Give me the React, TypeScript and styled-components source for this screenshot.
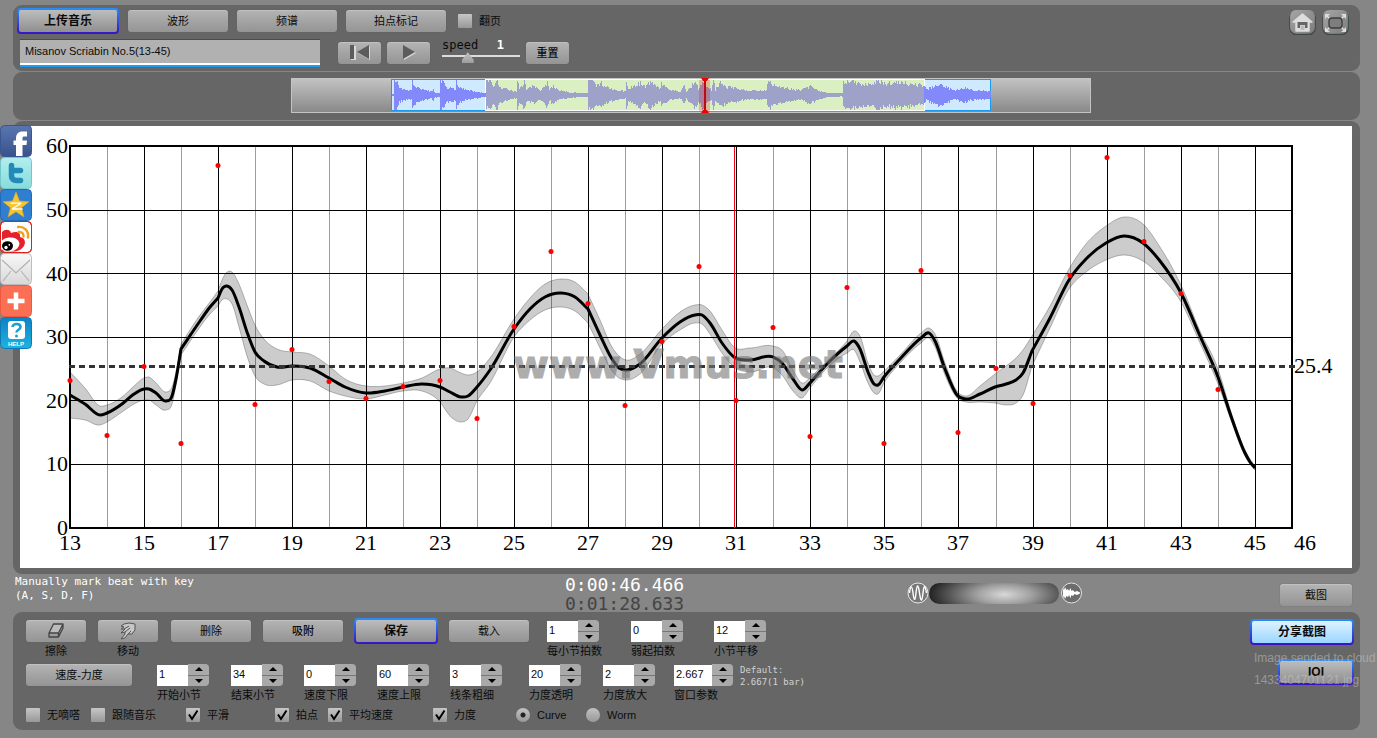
import React from "react";
import styled, { createGlobalStyle, css } from "styled-components";

const SANS = '"Liberation Sans", "Noto Sans CJK SC", sans-serif';
const MONO = '"DejaVu Sans Mono", monospace';

const GlobalStyle = createGlobalStyle`
  * { box-sizing: border-box; }
  body {
    margin: 0;
    background: #868686;
    overflow-x: hidden;
    font: 11px/14px ${SANS};
    color: #0b0b0b;
  }
  button, input { font: inherit; color: inherit; margin: 0; }
`;

const Page = styled.main`
  position: relative;
  display: flex;
  flex-direction: column;
  gap: 1px;
  padding: 5px 17px 7px 13px;
  overflow: hidden;
`;

const Panel = styled.section`
  background: #666;
  border-radius: 9px;
`;

/* ---------- shared controls ---------- */

const ringed = css`
  border: 2px solid transparent;
  border-radius: 4px;
  font-weight: bold;
`;

const Button = styled.button<{ $w: number; $ring?: boolean; $blue?: boolean; $bold?: boolean }>`
  display: inline-flex;
  align-items: center;
  justify-content: center;
  width: ${(p) => p.$w}px;
  height: ${(p) => (p.$ring ? 26 : 22)}px;
  padding: 0;
  border: 0;
  border-radius: 3px;
  font-size: ${(p) => (p.$ring ? 12 : 11)}px;
  line-height: 14px;
  font-weight: ${(p) => (p.$bold ? 500 : 400)};
  cursor: pointer;
  background: linear-gradient(#b4b4b4, #949494);
  box-shadow: inset 0 1px 0 rgba(255, 255, 255, 0.18), 0 0 1px #505050;
  ${(p) =>
    p.$ring &&
    css`
      ${ringed}
      box-shadow: none;
      background:
        linear-gradient(${p.$blue ? "#dff3ff, #9bd6ff" : "#bdbdbd, #8f8f8f"}) padding-box,
        linear-gradient(#2a8ff5, #3a10c8) border-box;
    `}
`;

const CheckLabel = styled.label`
  display: inline-flex;
  align-items: center;
  gap: 7px;
  white-space: nowrap;
`;

const Tick = styled.input`
  appearance: none;
  width: 14px;
  height: 14px;
  flex: none;
  border-radius: 1px;
  background: linear-gradient(#c6c6c6, #989898);
  &:checked {
    background:
      url("data:image/svg+xml,%3Csvg xmlns='http://www.w3.org/2000/svg' viewBox='0 0 14 14'%3E%3Cpath d='M3 6.5L6 11L11.5 2.5' fill='none' stroke='%23000' stroke-width='2'/%3E%3C/svg%3E"),
      linear-gradient(#c6c6c6, #989898);
  }
`;

const Radio = styled.input`
  appearance: none;
  width: 14px;
  height: 14px;
  flex: none;
  border-radius: 50%;
  background: linear-gradient(#c2c2c2, #989898);
  &:checked {
    background: radial-gradient(circle, #222 0 2px, transparent 3px), linear-gradient(#c2c2c2, #989898);
  }
`;

/* ---------- header ---------- */

const Header = styled(Panel)`
  display: flex;
  justify-content: space-between;
  padding: 3px 11px 4px 4px;
`;

const HeaderRows = styled.div`
  display: flex;
  flex-direction: column;
  gap: 5px;
`;

const TabRow = styled.div`
  display: flex;
  align-items: center;
  gap: 9px;
  & > label { margin-left: 3px; }
`;

const TransportRow = styled.div`
  display: flex;
  align-items: center;
  gap: 6px;
  padding-left: 3px;
`;

const TitleField = styled.input`
  width: 300px;
  height: 28px;
  margin-right: 12px;
  padding: 0 5px 3px;
  border: 0;
  border-top: 1px solid #4c4c4c;
  border-bottom: 2px solid #1d9bf5;
  background: linear-gradient(#b1b1b1, #b1b1b1) top / 100% 23px no-repeat, #fff;
`;

const Speed = styled.label`
  display: flex;
  flex-wrap: wrap;
  width: 78px;
  margin-left: 6px;
  margin-top: -4px;
  font: 12px/12px ${MONO};
  b { margin-left: auto; margin-right: 16px; color: #fff; }
`;

const SpeedRange = styled.input`
  appearance: none;
  width: 78px;
  height: 12px;
  background: linear-gradient(#dcdcdc, #dcdcdc) center 4px / 100% 2px no-repeat;
  &::-webkit-slider-thumb {
    appearance: none;
    width: 12px;
    height: 12px;
    background: linear-gradient(#c9c9c9, #9c9c9c);
    clip-path: polygon(50% 10%, 100% 75%, 100% 100%, 0 100%, 0 75%);
  }
`;

const CornerTools = styled.div`
  display: flex;
  gap: 6px;
  padding-top: 2px;
`;

const ToolButton = styled.button`
  width: 27px;
  height: 25px;
  padding: 0;
  border: 0;
  border-radius: 7px;
  background: linear-gradient(135deg, #a6a6a6, #7b7b7b);
  box-shadow: inset -1px -1px 1px #3a4a46, inset 1px -1px 1px #444;
  svg { display: block; }
`;

/* ---------- overview ---------- */

const Overview = styled(Panel)`
  display: flex;
  justify-content: center;
  padding: 6px 0 7px 9px;
`;

const OverviewBar = styled.div`
  display: flex;
  justify-content: center;
  width: 800px;
  height: 35px;
  border: 1px solid #c4c4c4;
  background: linear-gradient(#c2c2c2, #898989);
  svg { display: block; overflow: visible; }
`;

const ENVELOPE: [number, number][] = [
  [391, 1], [393, 1], [394, 16], [397, 16], [398, 12], [399, 8], [405, 6], [411, 5], [412, 16], [414, 10], [420, 7],
  [430, 4], [433, 6], [434, 3], [439, 2], [440, 17], [443, 16], [445, 9], [455, 6], [456, 16], [458, 10],
  [465, 6], [475, 4], [485, 2], [486, 15], [490, 17], [493, 10], [497, 17], [499, 9], [510, 5], [516, 4],
  [517, 17], [519, 9], [522, 10], [524, 17], [526, 7], [534, 10], [540, 5], [547, 14], [549, 6], [552, 10],
  [560, 5], [570, 3], [587, 2], [588, 17], [592, 17], [596, 10], [600, 14], [610, 7], [625, 4], [626, 14],
  [628, 7], [640, 13], [645, 9], [650, 15], [655, 10], [660, 7], [661, 13], [670, 5], [680, 4], [684, 10],
  [686, 4], [695, 15], [698, 7], [702, 15], [708, 8], [711, 6], [713, 17], [715, 6], [720, 14], [727, 9],
  [735, 8], [745, 5], [766, 5], [768, 17], [772, 12], [780, 9], [790, 7], [800, 5], [810, 10], [820, 4],
  [830, 2], [842, 2], [843, 14], [847, 16], [855, 14], [870, 11], [878, 17], [885, 12], [895, 15], [905, 14],
  [924, 10], [926, 6], [938, 13], [945, 9], [955, 5], [963, 8], [975, 5], [985, 5], [991, 4],
];

const noise = (n: number) => {
  const v = Math.sin(n * 127.1) * 43758.5;
  return v - Math.floor(v);
};

function waveform() {
  let d = "";
  let k = 0;
  for (let x = 392; x < 991; x++) {
    while (k < ENVELOPE.length - 2 && ENVELOPE[k + 1][0] <= x) k++;
    const [x0, a0] = ENVELOPE[k];
    const [x1, a1] = ENVELOPE[k + 1];
    const a = a0 + ((a1 - a0) * (x - x0)) / (x1 - x0);
    const up = Math.min(15, Math.max(1, Math.round(a * (0.7 + 0.35 * noise(x)))));
    const dn = Math.min(15, Math.max(1, Math.round(a * (0.7 + 0.35 * noise(x + 900)))));
    d += `M${x + 0.5} ${94 - up}V${94 + dn}`;
  }
  return d;
}

const OverviewWave = () => (
  <svg width="600" height="33" viewBox="391 78 600 33" role="img" aria-label="waveform overview">
    <rect x="391.5" y="78.5" width="599" height="31" fill="#cfeaff" stroke="#1b9bf0" />
    <rect x="485.5" y="78.5" width="439" height="31" fill="#dbf0c2" stroke="#fff" />
    <clipPath id="sel"><rect x="486" y="78" width="438" height="34" /></clipPath>
    <path d={waveform()} stroke="#8389fb" />
    <path d={waveform()} stroke="#9fa2c8" clipPath="url(#sel)" />
    <rect x="699" y="79" width="11" height="31" fill="#d00" opacity="0.22" />
    <path d="M705 77V111" stroke="#b80c14" strokeWidth="2" />
    <path d="M701 77h8l-2 3h-4zM701 112h8l-2-3h-4z" fill="#f00000" />
  </svg>
);

/* ---------- chart ---------- */

const ChartPanel = styled(Panel)`
  padding: 5px 8px 6px 7px;
  svg { display: block; width: 100%; height: auto; background: #fff; }
`;

/* x, curve, band top, band bottom */
const CURVE: [number, number, number, number][] = [
  [70, 395, 372, 418], [85, 404, 388, 420], [100, 415, 406, 425], [107, 413, 405, 422], [122, 404, 397, 412],
  [134, 394, 386, 404], [144, 389, 378, 400], [149, 389, 377, 400], [156, 393, 383, 405], [166, 401, 392, 410],
  [172, 396, 387, 404], [176, 379, 372, 385], [181, 349, 344, 355], [200, 321, 315, 327], [210, 307, 302, 314],
  [218, 298, 291, 306], [222, 289, 280, 300], [227, 286, 272, 299], [232, 290, 272, 304], [239, 307, 284, 327],
  [247, 332, 305, 356], [255, 352, 325, 376], [264, 361, 339, 384], [277, 367, 349, 385], [292, 366, 352, 380],
  [310, 368, 354, 381], [329, 378, 366, 391], [345, 387, 379, 396], [366, 393, 386, 399], [385, 391, 386, 395],
  [403, 387, 383, 391], [422, 384, 378, 391], [440, 387, 369, 402], [450, 392, 368, 416], [461, 397, 373, 422],
  [468, 396, 375, 419], [477, 387, 372, 401], [490, 370, 358, 383], [514, 329, 319, 337], [530, 309, 298, 320],
  [545, 297, 284, 310], [561, 293, 279, 307], [575, 297, 282, 311], [588, 309, 294, 323], [600, 335, 320, 348],
  [612, 359, 347, 371], [619, 368, 356, 378], [626, 370, 360, 380], [640, 364, 354, 374], [662, 338, 329, 344],
  [680, 322, 312, 330], [695, 315, 305, 323], [702, 315, 305, 324], [710, 323, 311, 334], [722, 343, 330, 353],
  [734, 357, 347, 367], [750, 360, 348, 372], [773, 357, 346, 368], [782, 363, 350, 375], [793, 379, 370, 391],
  [802, 390, 383, 398], [810, 383, 378, 388], [828, 363, 360, 367], [847, 346, 341, 353], [854, 341, 331, 350],
  [860, 349, 336, 362], [868, 372, 363, 383], [874, 384, 375, 393], [878, 385, 376, 394], [884, 377, 371, 383],
  [900, 359, 355, 363], [921, 338, 333, 343], [929, 333, 328, 338], [935, 341, 334, 347], [945, 369, 363, 375],
  [957, 395, 391, 398], [966, 399, 396, 402], [980, 394, 386, 402], [995, 387, 374, 403], [1006, 384, 366, 405],
  [1016, 380, 358, 403], [1023, 373, 350, 395], [1032, 351, 336, 366], [1050, 318, 306, 328], [1069, 280, 269, 289],
  [1086, 259, 244, 272], [1106, 243, 226, 260], [1124, 236, 217, 255], [1143, 243, 224, 261], [1160, 261, 247, 276],
  [1181, 293, 285, 302], [1200, 336, 331, 343], [1218, 377, 369, 384], [1232, 419, 415, 423], [1245, 453, 450, 456],
  [1250, 462, 459, 464], [1255, 468, 466, 470],
];

/* Bars where the curve turns sharply. */
const KINKS = [181, 218, 588, 810, 1032];

/* Cubic spline whose slope at each knot comes from the parabola through its neighbours. */
function spline(points: [number, number][]) {
  const secant = (i: number) => (points[i + 1][1] - points[i][1]) / (points[i + 1][0] - points[i][0]);
  const last = points.length - 1;
  const slope = (i: number, segment: number) => {
    const x = points[i][0];
    if (i === 0 || i === last || KINKS.includes(x)) return secant(segment);
    const hl = x - points[i - 1][0];
    const hr = points[i + 1][0] - x;
    return (secant(i - 1) * hr + secant(i) * hl) / (hl + hr);
  };
  let d = "";
  for (let i = 1; i < points.length; i++) {
    const [x0, y0] = points[i - 1];
    const [x1, y1] = points[i];
    const h = (x1 - x0) / 3;
    d += `C${x0 + h} ${y0 + slope(i - 1, i - 1) * h} ${x1 - h} ${y1 - slope(i, i - 1) * h} ${x1} ${y1}`;
  }
  return d;
}

const centre = CURVE.map(([x, y]) => [x, y] as [number, number]);
const top = CURVE.map(([x, , y]) => [x, y] as [number, number]);
const bottom = CURVE.map(([x, , , y]) => [x, y] as [number, number]).reverse();
const LINE = `M${centre[0].join(" ")}${spline(centre)}`;
const BAND = `M${top[0].join(" ")}${spline(top)}L${bottom[0].join(" ")}${spline(bottom)}Z`;

const BEATS = [
  380, 435, 366, 443, 165, 404, 349, 381, 398, 386, 380, 418, 326, 251, 303, 405, 341, 266, 400, 327, 436, 287, 443,
  270, 432, 368, 403, 275, 157, 241, 293, 389,
];

const barX = (bar: number) => Math.round(70 + (bar - 13) * 37.02);

const AxisText = styled.text`
  font: 22px "Liberation Serif", serif;
  fill: #000;
`;

const Watermark = styled.text`
  font: bold 39px "DejaVu Sans", sans-serif;
  fill: #777;
  stroke: #777;
  opacity: 0.6;
`;

const TempoChart = () => (
  <svg viewBox="20 126 1332 442" role="img" aria-label="tempo and dynamics curve">
    {Array.from({ length: 33 }, (_, i) => i + 13).map((bar) => (
      <path key={bar} d={`M${barX(bar) + 0.5} 147V528`} stroke={bar % 2 ? "#000" : "#9c9c9c"} />
    ))}
    {[10, 20, 30, 40, 50].map((v) => (
      <path key={v} d={`M70 ${Math.floor(528 - v * 6.36) + 0.5}H1292`} stroke="#000" />
    ))}
    <rect x="70" y="146" width="1222" height="382" fill="none" stroke="#000" strokeWidth="2" />
    <path d={BAND} fill="#000" fillOpacity="0.2" stroke="#000" strokeOpacity="0.25" />
    <path d={LINE} fill="none" stroke="#000" strokeWidth="3" />
    <path d="M69 366.5H1296" stroke="#333" strokeWidth="3" strokeDasharray="6 4" />
    <Watermark x="513" y="378">www.Vmus.net</Watermark>
    {BEATS.map((y, i) => (
      <circle key={i} cx={barX(13 + i)} cy={y + 0.5} r="2.5" fill="#f00" />
    ))}
    <path d="M734.5 147V528" stroke="#f00010" strokeWidth="1" />
    {[0, 10, 20, 30, 40, 50, 60].map((v) => (
      <AxisText key={v} x="68" y={535 - v * 6.36} textAnchor="end">{v}</AxisText>
    ))}
    {Array.from({ length: 17 }, (_, i) => 13 + i * 2).map((bar) => (
      <AxisText key={bar} x={barX(bar)} y="550" textAnchor="middle">{bar}</AxisText>
    ))}
    <AxisText x="1305" y="550" textAnchor="middle">46</AxisText>
    <AxisText x="1294" y="373">25.4</AxisText>
  </svg>
);

/* ---------- status strip ---------- */

const Status = styled.section`
  display: grid;
  grid-template-columns: 550fr 342fr 373fr 72px;
  height: 36px;
  padding: 0 8px 0 2px;
`;

const Hint = styled.p`
  margin: 0;
  font: 11px/14px ${MONO};
  color: #fff;
`;

const Clock = styled.div`
  font: 18px/19px ${MONO};
  color: #fff;
  span { display: block; }
  span + span { color: #444; }
`;

const Mixer = styled.label`
  display: flex;
  align-items: center;
  height: 36px;
`;

const MixRange = styled.input`
  appearance: none;
  width: 130px;
  height: 21px;
  border-radius: 11px;
  background: radial-gradient(ellipse 76px 26px at 58% 55%, #d8d8d8, #a2a2a2 35%, #5c5c5c 70%, #222);
  &::-webkit-slider-thumb { appearance: none; width: 10px; height: 20px; background: transparent; }
`;

const StatusAction = styled.div`
  padding-top: 9px;
`;

/* ---------- settings ---------- */

const Settings = styled(Panel)`
  position: relative;
  display: flex;
  justify-content: space-between;
  padding: 8px 6px 8px 13px;
`;

const Rows = styled.div`
  display: flex;
  flex-direction: column;
  gap: 6px;
`;

const Row = styled.div<{ $cols: string }>`
  display: grid;
  grid-template-columns: ${(p) => p.$cols};
  align-items: start;
`;

const Cell = styled.div<{ $w?: number }>`
  display: flex;
  flex-direction: column;
  gap: 2px;
  width: ${(p) => (p.$w ? `${p.$w}px` : "auto")};
  align-items: ${(p) => (p.$w ? "center" : "flex-start")};
  white-space: nowrap;
`;

const RingCell = styled.div`
  margin: -2px;
`;

const Field = styled.label`
  display: flex;
  flex-direction: column;
  gap: 2px;
  white-space: nowrap;
`;

const SpinBox = styled.span`
  display: flex;
  height: 22px;
`;

const SpinInput = styled.input<{ $w: number }>`
  width: ${(p) => p.$w}px;
  height: 21px;
  margin-top: 1px;
  padding: 0 2px 4px;
  border: 0;
  background: #fff;
`;

const Steps = styled.span`
  display: flex;
  flex-direction: column;
  gap: 1px;
  width: 21px;
  border-radius: 0 4px 4px 0;
  overflow: hidden;
  background: #777;
`;

const Step = styled.button`
  flex: 1;
  display: flex;
  align-items: center;
  justify-content: center;
  padding: 0;
  border: 0;
  background: #a9a9a9;
`;

const DefaultNote = styled.p`
  margin: 0;
  font: 9px/12px ${MONO};
  color: #d2d2d2;
  white-space: nowrap;
`;

const ShareColumn = styled.div`
  display: flex;
  flex-direction: column;
  align-items: flex-end;
  gap: 14px;
  margin-top: -1px;
`;

const ShareMessage = styled.p`
  position: absolute;
  top: 35px;
  right: -19px;
  width: 125px;
  margin: 0;
  font-size: 12px;
  line-height: 22px;
  color: #c8c8c8;
  opacity: 0.5;
  white-space: nowrap;
  pointer-events: none;
`;

const Spinner = ({ label, value, w = 31 }: { label: string; value: string; w?: number }) => (
  <Field>
    <SpinBox>
      <SpinInput $w={w} defaultValue={value} aria-label={label} />
      <Steps>
        <Step type="button" aria-label={`${label} +`}>
          <svg width="8" height="4"><path d="M0 4L4 0L8 4Z" /></svg>
        </Step>
        <Step type="button" aria-label={`${label} -`}>
          <svg width="8" height="4"><path d="M0 0L4 4L8 0Z" /></svg>
        </Step>
      </Steps>
    </SpinBox>
    {label}
  </Field>
);

const Check = ({ label, on }: { label: string; on?: boolean }) => (
  <CheckLabel>
    <Tick type="checkbox" defaultChecked={on} />
    {label}
  </CheckLabel>
);

/* ---------- share links ---------- */

const Social = styled.nav`
  position: absolute;
  left: 0;
  top: 125px;
  display: flex;
  flex-direction: column;
`;

const SocialLink = styled.a`
  display: block;
  width: 32px;
  height: 32px;
  svg { display: block; }
`;

const tile = (fill: string, stroke: string) => (
  <rect x="0.5" y="0.5" width="31" height="31" rx="4" fill={fill} stroke={stroke} />
);

const HelpText = styled.text`
  font: bold 6px ${SANS};
  fill: #fff;
`;

const SOCIAL: { name: string; art: React.ReactNode }[] = [
  {
    name: "Facebook",
    art: (
      <>
        {tile("url(#fb)", "#3a5690")}
        <path d="M16 31V20H13.500V15.500H16V13.500C16 9 18.500 6.500 22.500 6.500H27V11.500H24.500C22.800 11.500 22.500 12 22.500 13.500V15.500H27L26.500 20H22.500V31Z" fill="#fff" />
      </>
    ),
  },
  {
    name: "Twitter",
    art: (
      <>
        {tile("url(#tw)", "#74c8ca")}
        <path d="M11.500 8.500V19C11.500 22 13.500 23.500 16.500 23.500H20.500M11.500 13.500H20.500" fill="none" stroke="#2389b8" strokeWidth="5.500" strokeLinecap="round" strokeLinejoin="round" />
      </>
    ),
  },
  {
    name: "Qzone",
    art: (
      <>
        {tile("#2f7fd0", "#2468b8")}
        <path d="M16 3L19.500 12L29 12.700L21.600 18.700L24 28L16 22.800L8 28L10.400 18.700L3 12.700L12.500 12Z" fill="#f8c532" stroke="#e8a01c" strokeWidth="0.600" />
        <path d="M10.500 14.200H21L12 20H22.500" fill="none" stroke="#fff" strokeWidth="1.300" strokeLinejoin="bevel" />
      </>
    ),
  },
  {
    name: "Weibo",
    art: (
      <>
        {tile("#fff", "#d8231c")}
        <path d="M2 19V11C5 8 10 8 11 12C16 10 21 11 20 16C25 17 26 21 24 25C22 28 19 30 15 30.500H2Z" fill="#e6202c" />
        <ellipse cx="9.500" cy="23.500" rx="10" ry="7" fill="#fff" transform="rotate(-8 9.500 23.500)" />
        <ellipse cx="7.500" cy="25" rx="5.500" ry="4.800" fill="#000" />
        <circle cx="6" cy="26.500" r="1.700" fill="#fff" />
        <circle cx="9.300" cy="23.800" r="0.900" fill="#fff" />
        <path d="M18 6C24 5 29 10 28 16.500M18.500 11C22 10.500 24 13 23.500 15.500" fill="none" stroke="#f59d1c" strokeWidth="2.400" strokeLinecap="round" />
        <rect x="0.500" y="0.500" width="31" height="31" rx="4" fill="none" stroke="#d8231c" />
      </>
    ),
  },
  {
    name: "Email",
    art: (
      <>
        {tile("url(#ml)", "#bdbdbd")}
        <path d="M2 7L16 20L30 7M3 28L11 18M29 28L21 18" fill="none" stroke="#b2b2b2" strokeWidth="1.200" />
      </>
    ),
  },
  {
    name: "Share",
    art: (
      <>
        {tile("#fb6f54", "#ee5a40")}
        <path d="M16 7.500V24.500M7.500 16H24.500" stroke="#fff" strokeWidth="4.500" />
      </>
    ),
  },
  {
    name: "Help",
    art: (
      <>
        {tile("url(#hp)", "#0e78b4")}
        <rect x="8" y="4" width="17" height="18" rx="3" fill="#fff" />
        <path d="M12.500 10C12.500 6 20.500 6 20.500 10C20.500 13 16.500 12.500 16.500 15.500" fill="none" stroke="#1ba0d0" strokeWidth="2.600" />
        <circle cx="16.500" cy="19" r="1.500" fill="#1ba0d0" />
        <HelpText x="16" y="29" textAnchor="middle">HELP</HelpText>
      </>
    ),
  },
];

const Gradients = () => (
  <defs>
    <linearGradient id="fb" x2="0" y2="1"><stop stopColor="#5a76b0" /><stop offset="1" stopColor="#38528c" /></linearGradient>
    <linearGradient id="tw" x2="0" y2="1"><stop stopColor="#b4eeee" /><stop offset="1" stopColor="#86dcdc" /></linearGradient>
    <linearGradient id="ml" x2="0" y2="1"><stop stopColor="#f8f8f8" /><stop offset="1" stopColor="#d8d8d8" /></linearGradient>
    <linearGradient id="hp" x2="0" y2="1"><stop stopColor="#0c82c4" /><stop offset="1" stopColor="#1fb2e2" /></linearGradient>
  </defs>
);

const ROW_A = "72px 73px 92px 93px 93px 98px 84px 83px 60px";
const ROW_B = "131px 74px 73px 73px 73px 79px 74px 71px 66px 70px";
const ROW_C = "65px 95px 89px 53px 105px 83px 70px 80px";

export default function App() {
  return (
    <>
      <GlobalStyle />
      <Page>
        <Header as="header">
          <HeaderRows>
            <TabRow>
              <Button $w={102} $ring>上传音乐</Button>
              <Button $w={100}>波形</Button>
              <Button $w={100}>频谱</Button>
              <Button $w={100}>拍点标记</Button>
              <Check label="翻页" />
            </TabRow>
            <TransportRow>
              <TitleField defaultValue="Misanov Scriabin No.5(13-45)" aria-label="title" />
              <Button $w={43} aria-label="back to start">
                <svg width="24" height="18">
                  <path d="M3 2H8V16H3ZM22 2V16L10 9Z" fill="#d8d8d8" />
                  <path d="M2 1H6V15H2ZM21 1V15L9 8Z" fill="#5c5c5c" />
                </svg>
              </Button>
              <Button $w={43} aria-label="play">
                <svg width="16" height="18">
                  <path d="M3 2L15 9L3 16Z" fill="#d8d8d8" />
                  <path d="M2 1L14 8L2 15Z" fill="#5c5c5c" />
                </svg>
              </Button>
              <Speed>
                speed <b>1</b>
                <SpeedRange type="range" min="0" max="10" defaultValue="3" />
              </Speed>
              <Button $w={43} $bold>重置</Button>
            </TransportRow>
          </HeaderRows>
          <CornerTools>
            <ToolButton aria-label="home">
              <svg width="27" height="26" viewBox="0 0 27 26">
                <path d="M13.500 4L4 12H7V21H20V12H23Z" fill="#ddd" stroke="#ddd" strokeWidth="1.500" strokeLinejoin="round" />
                <path d="M8.500 18V12H18.500V18H16V15H11V18Z" fill="#666" />
                <path d="M11.500 15.500H15.500V20H11.500Z" fill="#bbb" />
              </svg>
            </ToolButton>
            <ToolButton aria-label="full screen">
              <svg width="27" height="26" viewBox="0 0 27 26">
                <path d="M3 4H8L3 9ZM24 4H19L24 9ZM3 22H8L3 17ZM24 22H19L24 17Z" fill="#ddd" />
                <path d="M4 5L8 9M23 5L19 9M4 21L8 17M23 21L19 17" stroke="#ddd" strokeWidth="1.500" />
                <rect x="7" y="8" width="13" height="10" rx="3" fill="#7d7d7d" stroke="#3c3c3c" strokeWidth="1.300" />
              </svg>
            </ToolButton>
          </CornerTools>
        </Header>

        <Overview>
          <OverviewBar><OverviewWave /></OverviewBar>
        </Overview>

        <ChartPanel><TempoChart /></ChartPanel>

        <Status>
          <Hint>Manually mark beat with key<br />(A, S, D, F)</Hint>
          <Clock><span>0:00:46.466</span><span>0:01:28.633</span></Clock>
          <Mixer>
            <svg width="22" height="24" viewBox="0 0 22 24">
              <circle cx="11" cy="12" r="10" fill="#777" stroke="#e8e8e8" />
              <path d="M2.500 12C3.500 4 5 4 6 12S8 21 9 12S11 2 12.500 12S15 21 16 12S18 4 19.500 12" fill="none" stroke="#fff" strokeWidth="1.400" />
            </svg>
            <MixRange type="range" aria-label="mix" />
            <svg width="24" height="24" viewBox="0 0 24 24">
              <circle cx="12.500" cy="12" r="10" fill="#6c6c6c" stroke="#e0e0e0" />
              <path d="M4 7L5 9L6 6L7.500 9L9 8L10 10L11.500 7L12.500 10L14 9L15.500 11L18 10L21 11.500V12.500L18 14L15.500 13L14 15L12.500 14L11.500 17L10 14L9 16L7.500 15L6 18L5 15L4 17Z" fill="#fff" />
            </svg>
          </Mixer>
          <StatusAction><Button $w={72}>截图</Button></StatusAction>
        </Status>

        <Settings>
          <Rows>
            <Row $cols={ROW_A}>
              <Cell $w={60}>
                <Button $w={60} aria-label="擦除">
                  <svg width="18" height="16" viewBox="0 0 18 16">
                    <path d="M6.500 1H16L11.500 10H2Z" fill="#bbb" />
                    <path d="M6.500 1H16V5L11.500 14H2V10L6.500 1ZM2 10H11.500L16 1M11.500 10V14" fill="none" stroke="#444" strokeWidth="1.300" strokeLinejoin="round" />
                  </svg>
                </Button>
                擦除
              </Cell>
              <Cell $w={60}>
                <Button $w={60} aria-label="移动">
                  <svg width="18" height="18" viewBox="0 0 18 18">
                    <path d="M5 2L10 1L16 2V8L13 12L9 12L6 16L2 17L6 12V10L2 11L6 7L2 7L5 5L2 4Z" fill="#c6c6c6" stroke="#555" strokeLinejoin="round" />
                    <path d="M5 7L10 4M6 10L11 6M9 12L12 9" stroke="#555" fill="none" />
                  </svg>
                </Button>
                移动
              </Cell>
              <Cell><Button $w={80}>删除</Button></Cell>
              <Cell><Button $w={80} $bold>吸附</Button></Cell>
              <RingCell><Button $w={84} $ring>保存</Button></RingCell>
              <Cell><Button $w={80}>载入</Button></Cell>
              <Spinner label="每小节拍数" value="1" />
              <Spinner label="弱起拍数" value="0" />
              <Spinner label="小节平移" value="12" />
            </Row>
            <Row $cols={ROW_B}>
              <Cell><Button $w={106}>速度-力度</Button></Cell>
              <Spinner label="开始小节" value="1" />
              <Spinner label="结束小节" value="34" />
              <Spinner label="速度下限" value="0" />
              <Spinner label="速度上限" value="60" />
              <Spinner label="线条粗细" value="3" />
              <Spinner label="力度透明" value="20" />
              <Spinner label="力度放大" value="2" />
              <Spinner label="窗口参数" value="2.667" w={38} />
              <DefaultNote>Default:<br />2.667(1 bar)</DefaultNote>
            </Row>
            <Row $cols={ROW_C}>
              <Check label="无嘀嗒" />
              <Check label="跟随音乐" />
              <Check label="平滑" on />
              <Check label="拍点" on />
              <Check label="平均速度" on />
              <Check label="力度" on />
              <CheckLabel><Radio type="radio" name="view" defaultChecked />Curve</CheckLabel>
              <CheckLabel><Radio type="radio" name="view" />Worm</CheckLabel>
            </Row>
          </Rows>
          <ShareColumn>
            <Button $w={104} $ring $blue>分享截图</Button>
            <Button $w={76} $ring>IOI</Button>
          </ShareColumn>
          <ShareMessage>Image sended to cloud<br />1433404701121.jpg</ShareMessage>
        </Settings>

        <Social aria-label="share">
          {SOCIAL.map((s) => (
            <SocialLink key={s.name} href="#" aria-label={s.name}>
              <svg width="32" height="32" viewBox="0 0 32 32"><Gradients />{s.art}</svg>
            </SocialLink>
          ))}
        </Social>
      </Page>
    </>
  );
}
